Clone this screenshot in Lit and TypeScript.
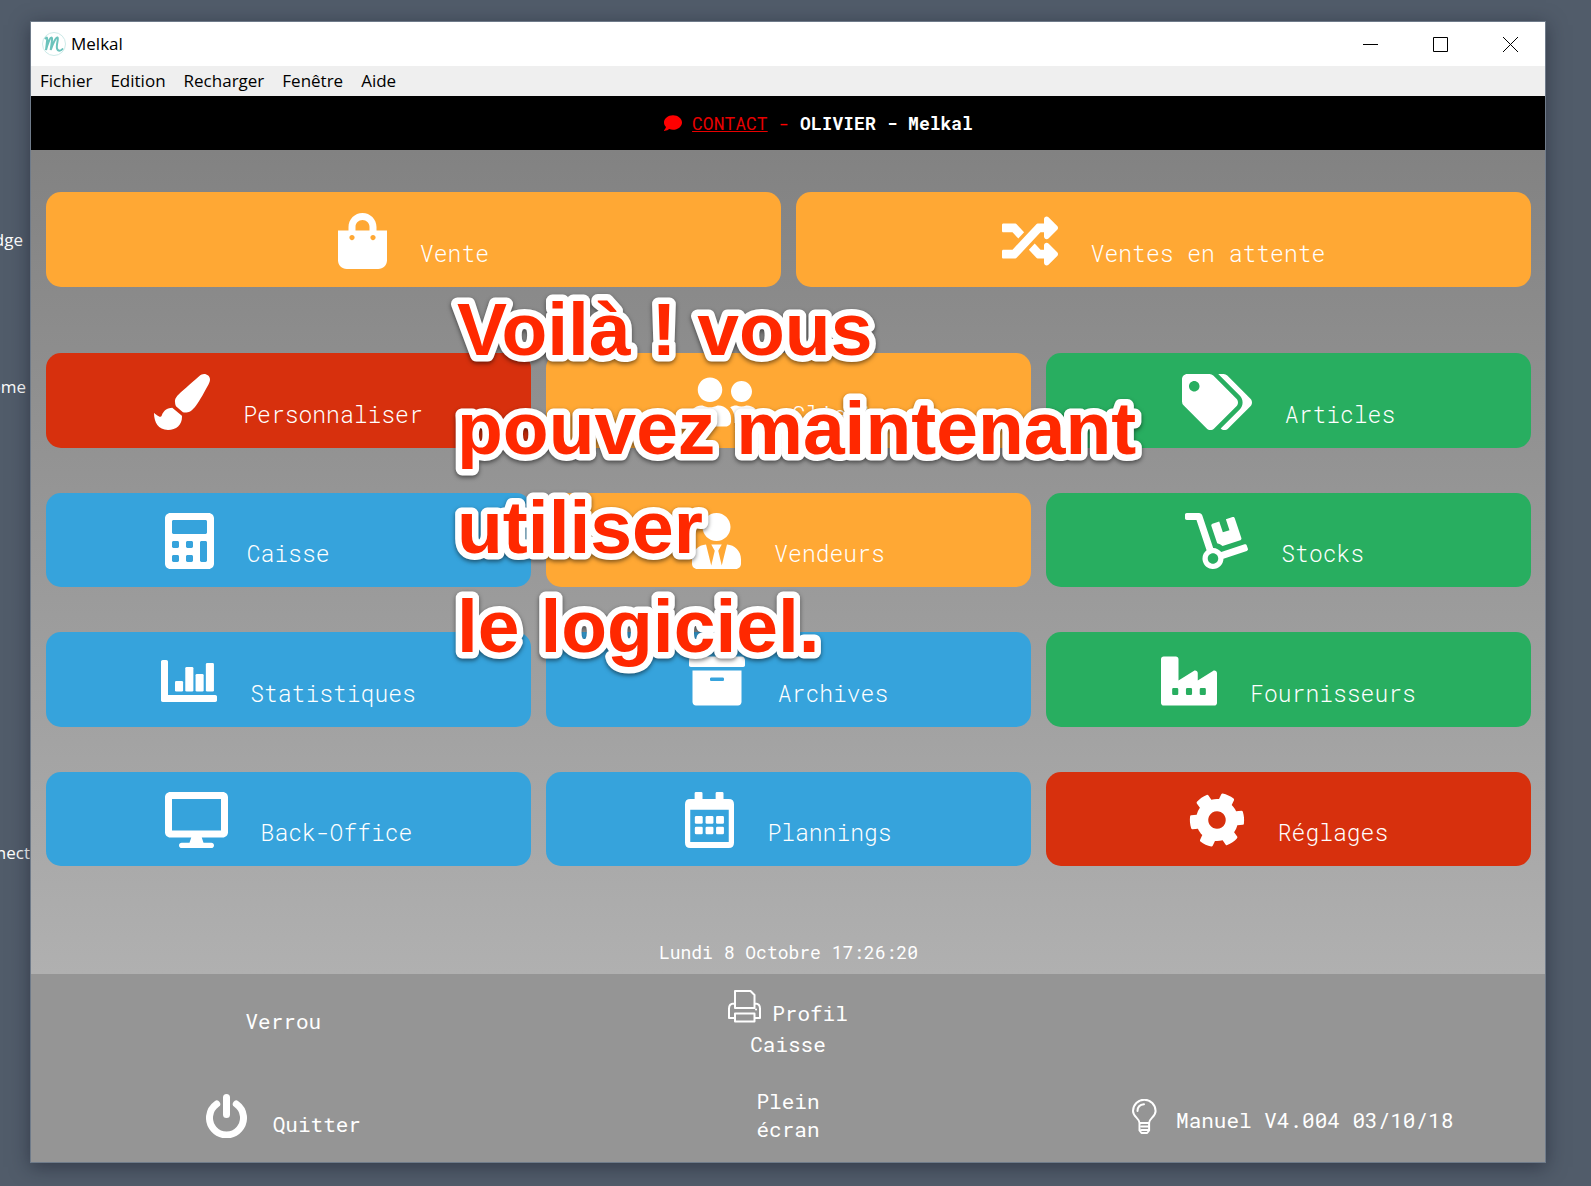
import { LitElement, html, css, svg, SVGTemplateResult } from "lit";
import { customElement } from "lit/decorators.js";
import { classMap } from "lit/directives/class-map.js";

interface Icon {
  width: number;
  shape: SVGTemplateResult;
}

interface Tile {
  label: string;
  icon: string;
  color: "orange" | "red" | "blue" | "green";
}

const icons: Record<string, Icon> = {
  bag: {
    width: 448,
    shape: svg`<path d="M352 160v-32C352 57.42 294.579 0 224 0 153.42 0 96 57.42 96 128v32H0v272c0 44.183 35.817 80 80 80h288c44.183 0 80-35.817 80-80V160h-96zm-192-32c0-35.29 28.71-64 64-64s64 28.71 64 64v32H160v-32zm160 120c-13.255 0-24-10.745-24-24s10.745-24 24-24 24 10.745 24 24-10.745 24-24 24zm-192 0c-13.255 0-24-10.745-24-24s10.745-24 24-24 24 10.745 24 24-10.745 24-24 24z"/>`,
  },
  shuffle: {
    width: 512,
    shape: svg`<path d="M504.971 359.029c9.373 9.373 9.373 24.569 0 33.941l-80 79.984c-15.01 15.01-40.971 4.49-40.971-16.971V416h-58.785a12.004 12.004 0 0 1-8.773-3.812l-70.556-75.596 53.333-57.143L352 336h32v-39.981c0-21.438 25.943-31.998 40.971-16.971l80 79.981zM12 176h84l52.781 56.551 53.333-57.143-70.556-75.596A11.999 11.999 0 0 0 122.785 96H12c-6.627 0-12 5.373-12 12v56c0 6.627 5.373 12 12 12zm372 0v39.984c0 21.46 25.961 31.98 40.971 16.971l80-79.984c9.373-9.373 9.373-24.569 0-33.941l-80-79.981C409.943 24.021 384 34.582 384 56.019V96h-58.785a12.004 12.004 0 0 0-8.773 3.812L96 336H12c-6.627 0-12 5.373-12 12v56c0 6.627 5.373 12 12 12h110.785c3.326 0 6.503-1.381 8.773-3.812L352 176h32z"/>`,
  },
  brush: {
    width: 512,
    shape: svg`<path d="M167.02 309.34c-40.12 2.58-76.53 17.86-97.19 72.3-2.35 6.21-8 9.98-14.59 9.98-11.11 0-45.46-27.67-55.25-34.35C0 439.62 37.93 512 128 512c75.86 0 128-43.77 128-120.19 0-3.11-.65-6.08-.97-9.13l-88.01-73.34zM457.89 0c-15.16 0-29.37 6.71-40.21 16.45C213.27 199.05 192 203.34 192 257.09c0 13.7 3.25 26.76 8.73 38.7l63.82 53.18c7.21 1.8 14.64 3.03 22.39 3.03 62.11 0 98.11-45.47 211.16-256.46 7.38-14.35 13.9-29.85 13.9-45.99C512 20.64 486 0 457.89 0z"/>`,
  },
  friends: {
    width: 640,
    shape: svg`<path d="M192 256c61.9 0 112-50.1 112-112S253.9 32 192 32 80 82.1 80 144s50.1 112 112 112zm76.8 32h-8.3c-20.8 10-43.9 16-68.5 16s-47.6-6-68.5-16h-8.3C51.6 288 0 339.6 0 403.2V432c0 26.5 21.5 48 48 48h288c26.5 0 48-21.5 48-48v-28.8c0-63.6-51.6-115.2-115.2-115.2zM480 256c53 0 96-43 96-96s-43-96-96-96-96 43-96 96 43 96 96 96zm48 32h-3.8c-13.9 4.8-28.6 8-44.2 8s-30.3-3.2-44.2-8H432c-20.4 0-39.2 5.9-55.7 15.4 24.4 26.3 39.7 61.2 39.7 99.8v38.4c0 2.2-.5 4.3-.6 6.4H592c26.5 0 48-21.5 48-48 0-61.9-50.1-112-112-112z"/>`,
  },
  tags: {
    width: 640,
    shape: svg`<path d="M497.941 225.941L286.059 14.059A48 48 0 0 0 252.118 0H48C21.49 0 0 21.49 0 48v204.118a48 48 0 0 0 14.059 33.941l211.882 211.882c18.744 18.745 49.136 18.746 67.882 0l204.118-204.118c18.745-18.745 18.745-49.137 0-67.882zM112 160c-26.51 0-48-21.49-48-48s21.49-48 48-48 48 21.49 48 48-21.49 48-48 48zm513.941 133.823L421.823 497.941c-18.745 18.745-49.137 18.745-67.882 0l-.36-.36L527.64 323.522c16.999-16.999 26.36-39.6 26.36-63.64s-9.362-46.641-26.36-63.64L331.397 0h48.721a48 48 0 0 1 33.941 14.059l211.882 211.882c18.745 18.745 18.745 49.137 0 67.882z"/>`,
  },
  calculator: {
    width: 448,
    shape: svg`<path d="M400 0H48C22.4 0 0 22.4 0 48v416c0 25.6 22.4 48 48 48h352c25.6 0 48-22.4 48-48V48c0-25.6-22.4-48-48-48zM128 435.2c0 6.4-6.4 12.8-12.8 12.8H76.8c-6.4 0-12.8-6.4-12.8-12.8v-38.4c0-6.4 6.4-12.8 12.8-12.8h38.4c6.4 0 12.8 6.4 12.8 12.8v38.4zm0-128c0 6.4-6.4 12.8-12.8 12.8H76.8c-6.4 0-12.8-6.4-12.8-12.8v-38.4c0-6.4 6.4-12.8 12.8-12.8h38.4c6.4 0 12.8 6.4 12.8 12.8v38.4zm128 128c0 6.4-6.4 12.8-12.8 12.8h-38.4c-6.4 0-12.8-6.4-12.8-12.8v-38.4c0-6.4 6.4-12.8 12.8-12.8h38.4c6.4 0 12.8 6.4 12.8 12.8v38.4zm0-128c0 6.4-6.4 12.8-12.8 12.8h-38.4c-6.4 0-12.8-6.4-12.8-12.8v-38.4c0-6.4 6.4-12.8 12.8-12.8h38.4c6.4 0 12.8 6.4 12.8 12.8v38.4zm128 128c0 6.4-6.4 12.8-12.8 12.8h-38.4c-6.4 0-12.8-6.4-12.8-12.8V268.8c0-6.4 6.4-12.8 12.8-12.8h38.4c6.4 0 12.8 6.4 12.8 12.8v166.4zm0-256c0 6.4-6.4 12.8-12.8 12.8H76.8c-6.4 0-12.8-6.4-12.8-12.8V76.8C64 70.4 70.4 64 76.8 64h294.4c6.4 0 12.8 6.4 12.8 12.8v102.4z"/>`,
  },
  seller: {
    width: 448,
    shape: svg`<path d="M224 256c70.7 0 128-57.3 128-128S294.7 0 224 0 96 57.3 96 128s57.3 128 128 128zm95.8 32.6L272 480l-32-136 32-56h-96l32 56-32 136-47.8-191.4C56.9 292 0 350.3 0 422.4V464c0 26.5 21.5 48 48 48h352c26.5 0 48-21.5 48-48v-41.6c0-72.1-56.9-130.4-128.2-133.8z"/>`,
  },
  dolly: {
    width: 576,
    shape: svg`<path d="M294.2 277.7c18 5 34.7 13.4 49.5 24.7l161.5-53.8c8.4-2.8 12.9-11.9 10.1-20.2L454.9 47.2c-2.8-8.4-11.9-12.9-20.2-10.1l-61.1 20.4 33.1 99.4L346 177l-33.1-99.4-61.6 20.5c-8.4 2.8-12.9 11.9-10.1 20.2l53 159.4zm281 48.7L565 296c-2.8-8.4-11.9-12.9-20.2-10.1l-213.5 71.2c-17.2-22-43.6-36.4-73.5-37L158.4 21.9C154 8.8 141.8 0 128 0H16C7.2 0 0 7.2 0 16v32c0 8.8 7.2 16 16 16h88.9l92.2 276.7c-26.1 20.4-41.7 53.6-36 90.5 6.1 39.4 37.9 72.3 77.3 79.2 60.2 10.7 112.3-34.8 113.4-92.6l213.3-71.2c8.3-2.8 12.9-11.8 10.1-20.2zM256 464c-26.5 0-48-21.5-48-48s21.5-48 48-48 48 21.5 48 48-21.5 48-48 48z"/>`,
  },
  chart: {
    width: 512,
    shape: svg`<path d="M64 384V80c0-9-7-16-16-16H16C7 64 0 71 0 80v352c0 9 7 16 16 16h480c9 0 16-7 16-16v-32c0-9-7-16-16-16z"/>
      <rect x="128" y="256" width="74" height="96" rx="12"/>
      <rect x="222" y="128" width="74" height="224" rx="12"/>
      <rect x="316" y="192" width="74" height="160" rx="12"/>
      <rect x="410" y="92" width="74" height="260" rx="12"/>`,
  },
  archive: {
    width: 512,
    shape: svg`<path d="M32 448c0 17.7 14.3 32 32 32h384c17.7 0 32-14.3 32-32V160H32v288zm160-212c0-6.6 5.4-12 12-12h104c6.6 0 12 5.4 12 12v8c0 6.6-5.4 12-12 12H204c-6.6 0-12-5.4-12-12v-8zM480 32H32C14.3 32 0 46.3 0 64v48c0 8.8 7.2 16 16 16h480c8.8 0 16-7.2 16-16V64c0-17.7-14.3-32-32-32z"/>`,
  },
  factory: {
    width: 512,
    shape: svg`<path fill-rule="evenodd" d="M475.1 163.8L336 252.3v-68.3c0-18.9-20.9-30.4-36.900-20.200L160 252.3V56c0-13.3-10.7-24-24-24H24C10.700 32 0 42.700 0 56v400c0 13.300 10.700 24 24 24h464c13.300 0 24-10.700 24-24V184c0-18.900-20.900-30.400-36.900-20.200zM114 320h32q12 0 12 12v40q0 12-12 12h-32q-12 0-12-12v-40q0-12 12-12zM240 320h32q12 0 12 12v40q0 12-12 12h-32q-12 0-12-12v-40q0-12 12-12zM366 320h32q12 0 12 12v40q0 12-12 12h-32q-12 0-12-12v-40q0-12 12-12z"/>`,
  },
  desktop: {
    width: 576,
    shape: svg`<path d="M528 0H48C21.5 0 0 21.5 0 48v320c0 26.500 21.500 48 48 48h192l-16 48h-72c-13.300 0-24 10.700-24 24s10.700 24 24 24h272c13.300 0 24-10.700 24-24s-10.700-24-24-24h-72l-16-48h192c26.500 0 48-21.500 48-48V48c0-26.500-21.500-48-48-48zm-16 352H64V64h448v288z"/>`,
  },
  calendar: {
    width: 448,
    shape: svg`<path fill-rule="evenodd" d="M48 64h40V12q0-12 12-12h48q12 0 12 12v52h120V12q0-12 12-12h48q12 0 12 12v52h48q48 0 48 48v352q0 48-48 48H48q-48 0-48-48V112q0-48 48-48zM48 162v294h352V162z"/>
      <rect x="90" y="220" width="72" height="70" rx="12"/>
      <rect x="188" y="220" width="72" height="70" rx="12"/>
      <rect x="284" y="220" width="72" height="70" rx="12"/>
      <rect x="90" y="318" width="72" height="68" rx="12"/>
      <rect x="188" y="318" width="72" height="68" rx="12"/>
      <rect x="284" y="318" width="72" height="68" rx="12"/>`,
  },
  cog: {
    width: 512,
    shape: svg`<path transform="rotate(25 256 256)" d="M487.4 315.7l-42.6-24.6c4.3-23.2 4.3-47 0-70.2l42.6-24.6c4.9-2.8 7.1-8.6 5.5-14-11.1-35.6-30-67.8-54.700-94.600-3.800-4.100-10-5.100-14.800-2.300L380.800 110c-17.900-15.400-38.500-27.300-60.800-35.100V25.800c0-5.600-3.900-10.500-9.400-11.700-36.700-8.200-74.300-7.800-109.200 0-5.500 1.200-9.400 6.100-9.400 11.700V75c-22.200 7.900-42.800 19.800-60.800 35.100L88.700 85.500c-4.900-2.800-11-1.900-14.800 2.300-24.700 26.700-43.600 58.900-54.700 94.600-1.700 5.400.6 11.200 5.500 14L67.300 221c-4.300 23.200-4.300 47 0 70.200l-42.600 24.600c-4.900 2.800-7.100 8.600-5.500 14 11.100 35.600 30 67.800 54.700 94.600 3.800 4.100 10 5.100 14.800 2.300l42.600-24.600c17.900 15.400 38.500 27.300 60.800 35.100v49.200c0 5.600 3.900 10.500 9.400 11.700 36.700 8.200 74.300 7.800 109.200 0 5.500-1.200 9.400-6.100 9.400-11.700v-49.200c22.200-7.900 42.800-19.800 60.800-35.100l42.600 24.600c4.900 2.800 11 1.900 14.800-2.300 24.700-26.700 43.600-58.900 54.700-94.600 1.500-5.500-.7-11.300-5.600-14.100zM256 336c-44.100 0-80-35.900-80-80s35.900-80 80-80 80 35.900 80 80-35.900 80-80 80z"/>`,
  },
};

const salesTiles: Tile[] = [
  { label: "Vente", icon: "bag", color: "orange" },
  { label: "Ventes en attente", icon: "shuffle", color: "orange" },
];

// Short labels carry trailing no-break spaces so that they line up with their column.
const moduleTiles: Tile[] = [
  { label: "Personnaliser", icon: "brush", color: "red" },
  { label: "Clients", icon: "friends", color: "orange" },
  { label: "Articles", icon: "tags", color: "green" },
  { label: "Caisse" + "\u00a0".repeat(6), icon: "calculator", color: "blue" },
  { label: "Vendeurs", icon: "seller", color: "orange" },
  { label: "Stocks" + "\u00a0".repeat(2), icon: "dolly", color: "green" },
  { label: "Statistiques", icon: "chart", color: "blue" },
  { label: "Archives", icon: "archive", color: "blue" },
  { label: "Fournisseurs", icon: "factory", color: "green" },
  { label: "Back-Office", icon: "desktop", color: "blue" },
  { label: "Plannings", icon: "calendar", color: "blue" },
  { label: "Réglages", icon: "cog", color: "red" },
];

const menus = ["Fichier", "Edition", "Recharger", "Fenêtre", "Aide"];

@customElement("title-bar")
class TitleBar extends LitElement {
  static styles = css`
    :host {
      display: flex;
      align-items: center;
      height: 44px;
      background: #fff;
      color: #000;
      font: 17px/24px "Open Sans", "Noto Sans", sans-serif;
    }
    .logo {
      width: 24px;
      height: 24px;
      margin: 0 5px 0 11px;
    }
    .name {
      flex: 1;
    }
    .control {
      display: grid;
      place-items: center;
      width: 70px;
      height: 44px;
      padding: 0;
      border: 0;
      background: none;
    }
    .glyph {
      width: 15px;
      height: 15px;
      fill: none;
      stroke: #000;
    }
  `;

  render() {
    return html`
      <svg class="logo" viewBox="0 0 24 24" fill="none" aria-hidden="true">
        <circle cx="12" cy="12" r="11.500" stroke="#cdeae8" />
        <path
          d="M3.500 6.500C5 4.500 5.500 6 5 9.500L4 18C5.500 12 8 5.500 9.500 5.500S9 14 8.700 18C11 11 14 5 15.500 5.500S14 13 15 16.500C15.800 19.500 19 19 20.500 17"
          stroke="#6cc3bc"
          stroke-width="2"
          stroke-linecap="round"
        />
      </svg>
      <span class="name">Melkal</span>
      <button class="control" aria-label="Réduire">
        <svg class="glyph" viewBox="0 0 15 15"><path d="M0 7.500h15" /></svg>
      </button>
      <button class="control" aria-label="Agrandir">
        <svg class="glyph" viewBox="0 0 15 15"><path d="M.5.5h14v14H.5z" /></svg>
      </button>
      <button class="control" aria-label="Fermer">
        <svg class="glyph" viewBox="0 0 15 15"><path d="M0 0l15 15M15 0L0 15" /></svg>
      </button>
    `;
  }
}

@customElement("menu-tile")
class MenuTile extends LitElement {
  static properties = { tile: { attribute: false } };
  declare tile: Tile;

  static styles = css`
    :host {
      display: flex;
    }
    .tile {
      flex: 1;
      display: flex;
      align-items: flex-end;
      justify-content: center;
      gap: 33px;
      padding: 20px 0 18px;
      border: 0;
      border-radius: 15px;
      color: #fff;
      font: 300 23px/32px "Roboto Mono", "Liberation Mono", monospace;
      white-space: nowrap;
    }
    .orange {
      background: #ffa834;
    }
    .red {
      background: #d7300d;
    }
    .blue {
      background: #36a3dc;
    }
    .green {
      background: #28ae60;
    }
    .icon {
      height: 56px;
      fill: #fff;
      flex: none;
    }
  `;

  render() {
    const { label, icon, color } = this.tile;
    const { width, shape } = icons[icon];
    return html`<button class=${classMap({ tile: true, [color]: true })}>
      <svg class="icon" viewBox="0 0 ${width} 512" aria-hidden="true">${shape}</svg>
      <span>${label}</span>
    </button>`;
  }
}

@customElement("app-root")
class AppRoot extends LitElement {
  static styles = css`
    :host {
      display: block;
    }
    .desktop {
      position: relative;
      display: flex;
      flex-direction: column;
      box-sizing: border-box;
      min-height: 100vh;
      padding: 21px 45px 23px 30px;
      overflow: hidden;
      background: #515c6a;
    }
    .shortcut {
      position: absolute;
      left: 0;
      display: flex;
      justify-content: flex-end;
      color: #fff;
      font: 17px/24px "Open Sans", "Noto Sans", sans-serif;
    }
    .edge {
      top: 228px;
      width: 23px;
    }
    .chrome {
      top: 375px;
      width: 26px;
    }
    .connect {
      top: 841px;
      width: 30px;
    }
    .window {
      position: relative;
      flex: 1;
      display: flex;
      flex-direction: column;
      border: 1px solid #6f7b8a;
      box-shadow: 0 4px 18px rgba(20, 24, 40, 0.5);
      font-family: "Roboto Mono", "Liberation Mono", monospace;
    }
    .menubar {
      display: flex;
      align-items: center;
      height: 30px;
      background: #efefef;
    }
    .menu {
      padding: 0 9px;
      border: 0;
      background: none;
      color: #000;
      font: 17px/24px "Open Sans", "Noto Sans", sans-serif;
    }
    .banner {
      display: flex;
      align-items: center;
      justify-content: center;
      height: 54px;
      padding-left: 61px;
      background: #000;
      color: #f00;
      font-size: 18px;
      line-height: 24px;
      white-space: pre;
    }
    .bubble {
      width: 18px;
      height: 18px;
      margin-right: 10px;
      fill: #f00;
    }
    .contact {
      color: #e80000;
    }
    .user {
      color: #fff;
    }
    .board {
      flex: 1;
      display: flex;
      flex-direction: column;
      padding: 42px 14px 10px 15px;
      background: linear-gradient(#828282, #b0b0b0);
    }
    .sales,
    .modules {
      display: grid;
      column-gap: 15px;
    }
    .sales {
      grid-template-columns: repeat(2, 1fr);
      grid-auto-rows: minmax(95px, auto);
      margin-bottom: 66px;
    }
    .modules {
      flex: 1;
      grid-template-columns: repeat(3, 1fr);
      grid-auto-rows: 1fr;
      row-gap: 45px;
    }
    .clock {
      margin: 74px 0 0;
      color: #fff;
      font-size: 18px;
      line-height: 24px;
      text-align: center;
    }
    .footer {
      display: grid;
      grid-template-columns: repeat(3, 1fr);
      grid-auto-rows: 94px;
      background: #959595;
    }
    .action {
      display: flex;
      align-items: center;
      justify-content: center;
      padding: 0;
      border: 0;
      background: none;
      color: #fff;
      font: 400 21px/28px "Roboto Mono", "Liberation Mono", monospace;
    }
    .stacked {
      flex-direction: column;
    }
    .profile {
      gap: 3px;
      padding-top: 6px;
    }
    .line {
      display: flex;
      align-items: flex-end;
      gap: 11px;
    }
    .quit {
      gap: 26px;
      align-items: flex-end;
      padding-bottom: 24px;
    }
    .manual {
      gap: 19px;
      align-items: flex-end;
      padding-bottom: 28px;
    }
    .outline {
      flex: none;
      fill: none;
      stroke: #fff;
      stroke-width: 2;
      stroke-linejoin: round;
      stroke-linecap: round;
    }
    .power {
      stroke-width: 7;
    }
    .printer {
      margin-bottom: 4px;
    }
    .callout {
      position: absolute;
      left: 447px;
      top: 279px;
      width: 720px;
      height: 410px;
      overflow: visible;
      pointer-events: none;
      font: bold 75px "Liberation Sans", Arial, sans-serif;
      fill: #ff2800;
      stroke: #fff;
      stroke-width: 13px;
      stroke-linejoin: round;
      paint-order: stroke;
      filter: drop-shadow(0 2px 2px rgba(0, 0, 0, 0.5));
    }
  `;

  render() {
    return html`
      <div class="desktop">
        <span class="shortcut edge">dge</span>
        <span class="shortcut chrome">ome</span>
        <span class="shortcut connect">nect</span>

        <div class="window">
          <title-bar></title-bar>
          <nav class="menubar">
            ${menus.map((name) => html`<button class="menu">${name}</button>`)}
          </nav>
          <header class="banner"><svg class="bubble" viewBox="0 0 512 512" aria-hidden="true"><path d="M256 32C114.600 32 0 125.100 0 240c0 49.600 21.400 95 57 130.700C44.500 421.100 2.700 466 2.200 466.500c-2.200 2.300-2.800 5.700-1.500 8.700S4.800 480 8 480c66.300 0 116-31.800 140.600-51.400 32.700 12.300 69 19.400 107.400 19.400 141.400 0 256-93.100 256-208S397.400 32 256 32z"/></svg><a class="contact" href="#contact">CONTACT</a><span> - </span><strong class="user">OLIVIER - Melkal</strong></header>

          <main class="board">
            <div class="sales">
              ${salesTiles.map((tile) => html`<menu-tile .tile=${tile}></menu-tile>`)}
            </div>
            <div class="modules">
              ${moduleTiles.map((tile) => html`<menu-tile .tile=${tile}></menu-tile>`)}
            </div>
            <p class="clock">Lundi 8 Octobre 17:26:20</p>
          </main>

          <footer class="footer">
            <button class="action">Verrou</button>
            <button class="action stacked profile">
              <span class="line">
                <svg class="outline printer" width="33" height="33" viewBox="0 0 33 33" aria-hidden="true">
                  <path d="M7 18V1h15.500L26.500 5v13zM7 13.500H6c-3 0-5 2-5 5V28h6M26.500 13.500h.5c3 0 5 2 5 5V28h-5.500M7 23.500h19.500v8H7zM28 19.500h.1" />
                </svg>
                <span>Profil</span>
              </span>
              <span>Caisse</span>
            </button>
            <span></span>
            <button class="action quit">
              <svg class="outline power" width="41" height="44" viewBox="0 0 41 44" aria-hidden="true">
                <path d="M10.700 10A17 17 0 1 0 30.300 10M20.500 3.500v17" />
              </svg>
              <span>Quitter</span>
            </button>
            <button class="action stacked">
              <span>Plein</span>
              <span>écran</span>
            </button>
            <button class="action manual">
              <svg class="outline" width="25" height="35" viewBox="0 0 25 35" aria-hidden="true">
                <path d="M7.500 24C7.500 19 1 18 1 12a11.300 11.300 0 0 1 22.600 0c0 6-6.500 7-6.500 12v7.500l-2 2.500h-5.600l-2-2.500zM7.500 24h9.600M9.500 27.500h7.600M9.500 31h7.600M5.500 12c0-4 2.500-6.500 6.500-6.800" />
              </svg>
              <span>Manuel V4.004 03/10/18</span>
            </button>
          </footer>
        </div>

        <svg class="callout" viewBox="0 0 720 410">
          <text x="10" y="76">Voilà ! vous</text>
          <text x="10" y="175">pouvez maintenant</text>
          <text x="10" y="274">utiliser</text>
          <text x="10" y="373">le logiciel.</text>
        </svg>
      </div>
    `;
  }
}
